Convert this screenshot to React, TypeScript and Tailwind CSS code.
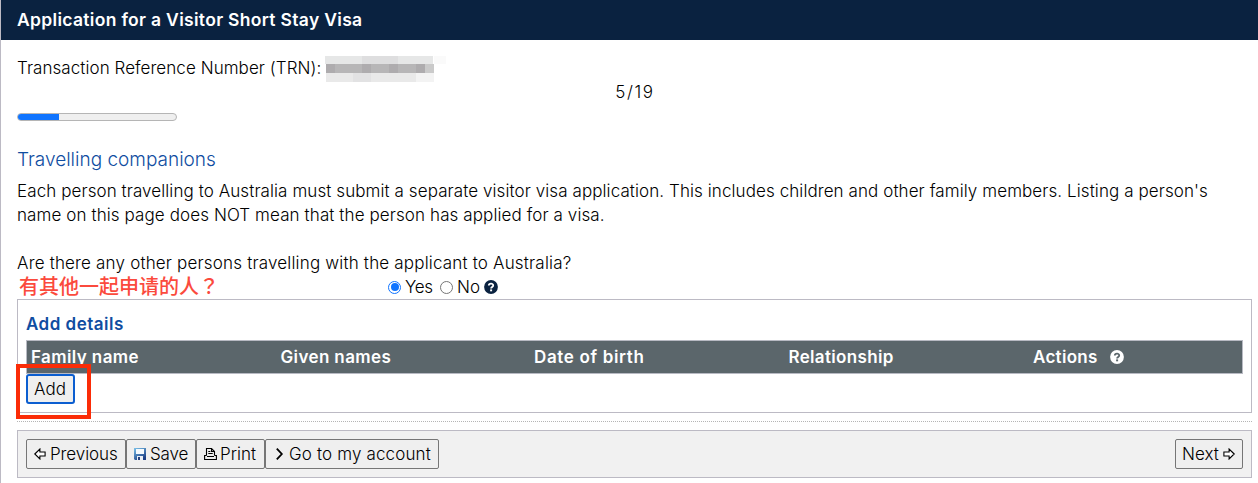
import type { ReactNode } from "react";

function HelpIcon({ className, mark }: { className: string; mark: string }) {
  return (
    <svg viewBox="0 0 14 14" className={`size-[14px] shrink-0 ${className}`}>
      <circle cx="7" cy="7" r="6.9" fill="currentColor" />
      <path d="M4.8 5.5C4.9 3.2 9.2 3.1 9.2 5.4C9.2 7 7.1 6.9 7.1 8.5" fill="none" stroke={mark} strokeWidth="1.8" />
      <rect x="6.1" y="9.4" width="2" height="1.9" fill={mark} />
    </svg>
  );
}

function ArrowIcon({ className }: { className?: string }) {
  return (
    <svg viewBox="0 0 12 12" className={`size-3 shrink-0 ${className ?? ""}`}>
      <path d="M.8 6 5.9 1v3h5.2v4H5.9v3Z" fill="#fff" stroke="#000" strokeWidth="1.1" />
    </svg>
  );
}

function SaveIcon() {
  return (
    <svg viewBox="0 0 12 12" className="size-3 shrink-0">
      <defs>
        <linearGradient id="disk" x1="0" y1="0" x2="0.6" y2="1">
          <stop offset="0" stopColor="#7cc3ea" />
          <stop offset="1" stopColor="#1c3f86" />
        </linearGradient>
      </defs>
      <path d="M0 0h12v12H1l-1-1Z" fill="url(#disk)" />
      <rect x="2" y="1" width="8" height="5" fill="#f4f9fd" />
      <rect x="3" y="8" width="6" height="4" fill="#e9eef5" />
      <rect x="4" y="9" width="2" height="3" fill="#24407c" />
    </svg>
  );
}

function PrintIcon() {
  return (
    <svg viewBox="0 0 13 12" className="h-3 w-[13px] shrink-0" fill="none" stroke="#000" strokeWidth="1.1">
      <path d="M2.5 7.5v-7h5l3 3v4M7.5.5v3h3M4.3 3.5h2M4.3 5.5h4.4" />
      <path d="M2.5 7.5H.6v4h11.8v-4h-1.9M3 8.5h7" />
    </svg>
  );
}

function ToolButton({ className, children }: { className: string; children: ReactNode }) {
  return (
    <button className={`flex h-[30px] items-center whitespace-nowrap rounded-[2px] border border-[#767676] bg-[#efefef] text-[17px] ${className}`}>
      {children}
    </button>
  );
}

const columns = [
  { label: "Family name", className: "w-[249.5px] tracking-[0.4px]" },
  { label: "Given names", className: "w-[253.5px] tracking-[0.38px]" },
  { label: "Date of birth", className: "w-[254.5px] tracking-[0.66px]" },
  { label: "Relationship", className: "w-[244.5px] tracking-[0.33px]" },
];

export default function App() {
  return (
    <div className="flex h-[483px] w-[1258px] flex-col overflow-hidden border-l border-[#bcbac4] bg-white font-[Inter,sans-serif] text-[17px] font-[350] leading-6 text-black">
      <header className="flex h-10 shrink-0 items-center bg-[#0a2240] pl-4 text-[17.5px] font-semibold tracking-[0.31px] text-white">
        Application for a Visitor Short Stay Visa
      </header>
      <main className="flex flex-col pl-4 pr-[6px] pt-4">
        <div className="flex h-6 items-center">
          <span className="w-[307px] whitespace-nowrap tracking-[0.06px]">Transaction Reference Number (TRN):</span>
          <svg viewBox="0 0 122 26" className="ml-px mt-[2px] h-[26px] w-[122px]" shapeRendering="crispEdges">
            <path d="M0 0h108v8H0z" fill="#e6e7e7" />
            <path d="M37 0h36v8H37z" fill="#dededf" />
            <path d="M109 0h12v8h-12z" fill="#fafafa" />
            <path d="M1 8h108v9H1z" fill="#b7b6b7" />
            <path d="M1 8h9v9H1zM37 8h9v9h-9zM64 8h9v9h-9zM91 8h9v9h-9z" fill="#aeacae" />
            <path d="M100 8h9v9h-9z" fill="#cacaca" />
            <path d="M1 17h90v9H1z" fill="#e9e9e9" />
            <path d="M28 17h18v9H28z" fill="#e2e2e3" />
            <path d="M91 17h18v9H91z" fill="#f3f3f3" />
          </svg>
        </div>
        <div className="h-6 pl-[1px] text-center tracking-[1.6px]">5/19</div>
        <div className="mt-[9px] h-2 w-40 overflow-hidden rounded-full border border-[#b5b5b5] bg-[#efefef]">
          <div className="-ml-px -mt-px h-2 w-[42px] bg-[#0f74ff]" />
        </div>
        <h1 className="mt-[27px] h-6 text-[19px] leading-6 text-[#0f4da1]">Travelling companions</h1>
        <p className="mt-[7px] whitespace-nowrap">
          <span className="block tracking-[0.085px]">Each person travelling to Australia must submit a separate visitor visa application. This includes children and other family members. Listing a person's</span>
          <span className="block tracking-[0.1px]">name on this page does NOT mean that the person has applied for a visa.</span>
        </p>
        <p className="mt-6 whitespace-nowrap tracking-[0.18px]">Are there any other persons travelling with the applicant to Australia?</p>
        <div className="flex h-6 items-center">
          <span className="mb-[3px] w-[371px] pl-[2px] font-['Noto_Sans_CJK_SC',sans-serif] text-[20px] font-medium leading-6 text-[#fb4a3d]">有其他一起申请的人<span className="font-['Noto_Sans_CJK_TC',sans-serif]" lang="zh-TW">？</span></span>
          <span className="flex size-[13px] items-center justify-center rounded-full border border-[#0f74ff] bg-white"><span className="size-2 rounded-full bg-[#0f74ff]" /></span>
          <span className="ml-1 w-[35px] tracking-[-0.3px]">Yes</span>
          <span className="size-[13px] rounded-full border border-[#767676] bg-white" />
          <span className="ml-1 w-[27px]">No</span>
          <HelpIcon className="text-[#0a2240]" mark="#fff" />
        </div>
        <section className="h-[114px] border border-[#bcbac4] px-2 pt-3">
          <h2 className="h-7 text-[17px] font-semibold leading-6 tracking-[0.5px] text-[#0f4da1]">Add details</h2>
          <div className="flex h-[34px] items-center border border-[#b8bac3] bg-[#5b666b] pl-1 text-[17px] font-semibold text-white">
            {columns.map((c) => (
              <span key={c.label} className={c.className}>{c.label}</span>
            ))}
            <span className="mr-3 tracking-[0.3px]">Actions</span>
            <HelpIcon className="text-white" mark="#5b666b" />
          </div>
          <div className="relative h-[30px]">
            <button className="h-[30px] w-[49px] rounded-[3px] border-2 border-[#0b5ed0] bg-[#efefef] pr-px text-[17px] leading-6">Add</button>
            <div className="absolute -left-[10px] -top-[10px] h-[55px] w-[75px] border-4 border-[#fb2c07]" />
          </div>
        </section>
        <div className="mt-2 border-t border-dotted border-[#b5b5b5]" />
        <footer className="mt-2 flex h-12 items-center justify-between border border-[#bcbac4] bg-[#f1f1f1] px-2">
          <div className="flex">
            <ToolButton className="w-[100px] pl-[7px] tracking-[-0.08px]"><ArrowIcon className="mr-1" />Previous</ToolButton>
            <ToolButton className="w-[70px] pl-[7px] tracking-[-0.15px]"><SaveIcon /><span className="ml-1">Save</span></ToolButton>
            <ToolButton className="w-[69px] pl-[7px]"><PrintIcon /><span className="ml-[3px]">Print</span></ToolButton>
            <ToolButton className="w-[174px] pl-[9px] tracking-[0.15px]">
              <svg viewBox="0 0 9 12" className="h-3 w-[9px]" fill="none" stroke="#000" strokeWidth="1.8"><path d="m1.8 .6 5 5.4-5 5.4" /></svg>
              <span className="ml-[5px]">Go to my account</span>
            </ToolButton>
          </div>
          <ToolButton className="w-[68px] pl-[6px]">Next<ArrowIcon className="ml-1 -scale-x-100" /></ToolButton>
        </footer>
      </main>
    </div>
  );
}
